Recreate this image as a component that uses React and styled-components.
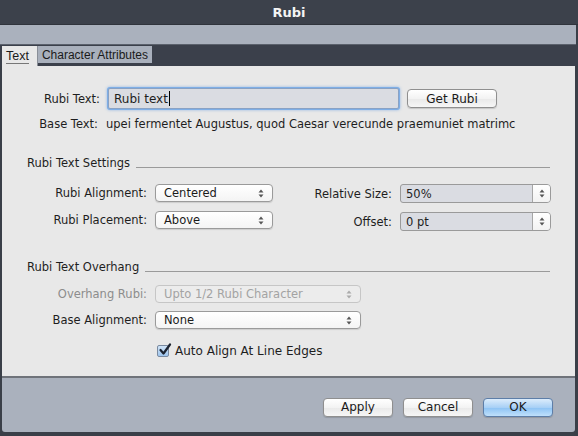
import React from 'react';
import styled, { createGlobalStyle } from 'styled-components';

const GlobalStyle = createGlobalStyle`
  html, body {
    margin: 0;
    padding: 0;
    background: #2f333b;
  }
  body {
    font-family: "DejaVu Sans", "Noto Sans", sans-serif;
    font-size: 11.5px;
    color: #1e1e1e;
  }
`;

const Window = styled.div`
  width: 578px;
  height: 436px;
  display: flex;
  flex-direction: column;
  background: #3a3f48;
  overflow: hidden;
`;

const TitleBar = styled.div`
  height: 24px;
  flex: none;
  display: flex;
  align-items: center;
  justify-content: center;
  background: #3c414b;
  border-bottom: 1px solid #30343c;
  color: #f4f4f4;
  font-weight: bold;
  font-size: 13px;
`;

const Strip = styled.div`
  height: 19px;
  flex: none;
  margin: 0 2px 0 0;
  background: #aab1bd;
  border-bottom: 1px solid #5b616c;
`;

const TabBar = styled.div`
  height: 20px;
  flex: none;
  display: flex;
  align-items: flex-start;
  padding: 1px 0 0 2px;
  background: #3b404b;
`;

const Tab = styled.div`
  height: ${p => (p.$active ? '20px' : '17px')};
  display: flex;
  align-items: center;
  padding: 0 ${p => (p.$active ? 8 : 4)}px 0 ${p => (p.$active ? 4 : 4)}px;
  background: ${p => (p.$active ? '#e8e8e8' : '#a9b0bc')};
  color: #1a1a1a;
  font-family: "Liberation Sans", Arial, sans-serif;
  font-size: ${p => (p.$active ? 12.5 : 12)}px;
  border-right: ${p => (p.$active ? '1px solid #8a8f98' : 'none')};
`;

const TabLabel = styled.span`
  border-bottom: ${p => (p.$underline ? '1px solid #777' : 'none')};
  line-height: 14px;
`;

const Content = styled.div`
  flex: 1;
  margin: 0 3px 0 2px;
  background: #e8e8e8;
  padding: 22px 25px 0 23px;
  display: flex;
  flex-direction: column;
  border-bottom: 2px solid #6f737a;
`;

const Row = styled.div`
  display: flex;
  align-items: center;
  margin-top: ${p => p.$mt || 0}px;
`;

const Label = styled.div`
  width: ${p => p.$w}px;
  flex: none;
  text-align: right;
  padding-right: 8px;
  box-sizing: border-box;
  color: ${p => (p.$disabled ? '#8c8c8c' : '#1e1e1e')};
  white-space: nowrap;
`;

const TextField = styled.div`
  width: 291px;
  height: 21px;
  box-sizing: border-box;
  display: flex;
  align-items: center;
  padding-left: 5px;
  background: #dadce2;
  border: 1px solid #8aa2c4;
  border-radius: 2px;
  box-shadow: 0 0 0 1px #7eaee6, 0 0 3px 1px rgba(90, 150, 225, 0.6);
  font-size: 12px;
`;

const Caret = styled.span`
  display: inline-block;
  width: 1px;
  height: 15px;
  background: #000;
  margin-left: 1px;
`;

const Spacer = styled.span`
  width: ${p => p.$w}px;
  flex: none;
`;

const PushButton = styled.button`
  width: ${p => p.$w || 70}px;
  height: 19px;
  padding: 0;
  font-family: inherit;
  font-size: 12px;
  color: #1a1a1a;
  border: 1px solid ${p => (p.$primary ? '#5d7ea8' : '#8f8f8f')};
  border-radius: 4px;
  background: ${p =>
    p.$primary
      ? 'linear-gradient(#dcecfb, #a8d0f6 50%, #8cc2f4 51%, #bfe0fb)'
      : 'linear-gradient(#ffffff, #f3f3f3 50%, #e9e9e9 51%, #f6f6f6)'};
  box-shadow: 0 1px 1px rgba(0, 0, 0, 0.15);
`;

const BaseValue = styled.div`
  white-space: nowrap;
`;

const SectionHead = styled.div`
  display: flex;
  align-items: center;
  gap: 6px;
  margin-top: ${p => p.$mt}px;
  margin-left: 2px;
  white-space: nowrap;
`;

const Rule = styled.div`
  flex: 1;
  height: 1px;
  background: #9a9a9a;
  margin-top: 8px;
`;

const Popup = styled.div`
  width: ${p => p.$w}px;
  height: 18px;
  box-sizing: border-box;
  display: flex;
  align-items: center;
  justify-content: space-between;
  padding: 0 8px 0 8px;
  border: 1px solid ${p => (p.$disabled ? '#c6c6c6' : '#9a9a9a')};
  border-radius: 4px;
  background: ${p => (p.$disabled ? '#ececec' : 'linear-gradient(#ffffff, #f4f4f4)')};
  color: ${p => (p.$disabled ? '#a3a3a3' : '#1a1a1a')};
  box-shadow: ${p => (p.$disabled ? 'none' : '0 1px 1px rgba(0,0,0,0.12)')};
  white-space: nowrap;
`;

const Combo = styled.div`
  width: 151px;
  height: 19px;
  box-sizing: border-box;
  display: flex;
  border: 1px solid #9a9a9a;
  border-radius: 3px 4px 4px 3px;
  background: #dadce2;
  overflow: hidden;
`;

const ComboText = styled.div`
  flex: 1;
  display: flex;
  align-items: center;
  padding-left: 5px;
  border-right: 1px solid #a6a6a6;
`;

const Stepper = styled.div`
  width: 17px;
  display: flex;
  align-items: center;
  justify-content: center;
  background: linear-gradient(#ffffff, #f2f2f2);
`;

const Columns = styled.div`
  display: flex;
  margin-top: ${p => p.$mt}px;
`;

const Column = styled.div`
  display: flex;
  flex-direction: column;
  gap: ${p => p.$gap || 8}px;
  width: ${p => p.$w}px;
`;

const CheckRow = styled.label`
  display: flex;
  align-items: center;
  gap: 6px;
  margin: 15px 0 0 132px;
  font-size: 12px;
`;

const CheckBox = styled.span`
  width: 12px;
  height: 12px;
  box-sizing: border-box;
  border: 1px solid #7a8aa0;
  border-radius: 2px;
  background: linear-gradient(#cfe3f7, #9fc6ee);
  position: relative;
`;

const Footer = styled.div`
  height: 54px;
  flex: none;
  margin: 0 3px 4px 2px;
  background: #aab1bd;
  border-radius: 0 0 3px 3px;
  display: flex;
  align-items: center;
  justify-content: flex-end;
  gap: 10px;
  padding: 4px 22px 0 0;
  box-sizing: border-box;
`;

const Arrows = ({ color = '#555' }) => (
  <svg width="6" height="9" viewBox="0 0 6 9">
    <path d="M3 0.5 L5.5 3.5 H0.5 Z" fill={color} />
    <path d="M3 8.5 L5.5 5.5 H0.5 Z" fill={color} />
  </svg>
);

const Check = () => (
  <svg width="14" height="14" viewBox="0 0 14 14" style={{ position: 'absolute', left: 0, top: -3 }}>
    <path d="M2.5 7 L5.5 10.5 L12 1.5" fill="none" stroke="#1c2330" strokeWidth="2.2" strokeLinecap="round" strokeLinejoin="round" />
  </svg>
);

export default function App() {
  return (
    <>
      <GlobalStyle />
      <Window>
        <TitleBar>Rubi</TitleBar>
        <Strip />
        <TabBar>
          <Tab $active>
            <TabLabel $underline>Text</TabLabel>
          </Tab>
          <Tab>
            <TabLabel>Character Attributes</TabLabel>
          </Tab>
        </TabBar>
        <Content>
          <Row>
            <Label $w={83}>Rubi Text:</Label>
            <TextField>
              Rubi text<Caret />
            </TextField>
            <Spacer $w={8} />
            <PushButton $w={90}>Get Rubi</PushButton>
          </Row>
          <Row $mt={8}>
            <Label $w={81}>Base Text:</Label>
            <BaseValue>upei fermentet Augustus, quod Caesar verecunde praemuniet matrimc</BaseValue>
          </Row>

          <SectionHead $mt={25}>
            Rubi Text Settings<Rule />
          </SectionHead>
          <Columns $mt={14}>
            <Column $w={248} $gap={9}>
              <Row>
                <Label $w={130}>Rubi Alignment:</Label>
                <Popup $w={118}>
                  Centered
                  <Arrows />
                </Popup>
              </Row>
              <Row>
                <Label $w={130}>Rubi Placement:</Label>
                <Popup $w={118}>
                  Above
                  <Arrows />
                </Popup>
              </Row>
            </Column>
            <Column $w={278} $gap={9}>
              <Row>
                <Label $w={127}>Relative Size:</Label>
                <Combo>
                  <ComboText>50%</ComboText>
                  <Stepper>
                    <Arrows />
                  </Stepper>
                </Combo>
              </Row>
              <Row>
                <Label $w={127}>Offset:</Label>
                <Combo>
                  <ComboText>0 pt</ComboText>
                  <Stepper>
                    <Arrows />
                  </Stepper>
                </Combo>
              </Row>
            </Column>
          </Columns>

          <SectionHead $mt={29}>
            Rubi Text Overhang<Rule />
          </SectionHead>
          <Columns $mt={11}>
            <Column $w={340}>
              <Row>
                <Label $w={130} $disabled>Overhang Rubi:</Label>
                <Popup $w={206} $disabled>
                  Upto 1/2 Rubi Character
                  <Arrows color="#aaa" />
                </Popup>
              </Row>
              <Row>
                <Label $w={130}>Base Alignment:</Label>
                <Popup $w={206}>
                  None
                  <Arrows />
                </Popup>
              </Row>
            </Column>
          </Columns>
          <CheckRow>
            <CheckBox>
              <Check />
            </CheckBox>
            Auto Align At Line Edges
          </CheckRow>
        </Content>
        <Footer>
          <PushButton>Apply</PushButton>
          <PushButton>Cancel</PushButton>
          <PushButton $primary>OK</PushButton>
        </Footer>
      </Window>
    </>
  );
}
